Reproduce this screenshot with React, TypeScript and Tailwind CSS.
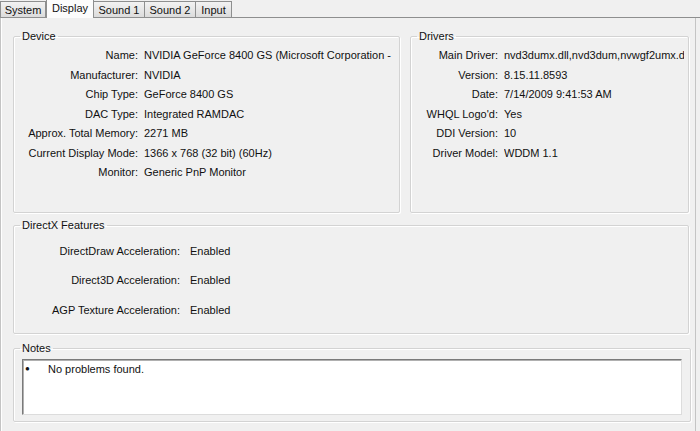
import React from "react";

const deviceRows: [string, string][] = [
  ["Name:", "NVIDIA GeForce 8400 GS (Microsoft Corporation -"],
  ["Manufacturer:", "NVIDIA"],
  ["Chip Type:", "GeForce 8400 GS"],
  ["DAC Type:", "Integrated RAMDAC"],
  ["Approx. Total Memory:", "2271 MB"],
  ["Current Display Mode:", "1366 x 768 (32 bit) (60Hz)"],
  ["Monitor:", "Generic PnP Monitor"],
];

const driverRows: [string, string][] = [
  ["Main Driver:", "nvd3dumx.dll,nvd3dum,nvwgf2umx.dll,nvwgf2um"],
  ["Version:", "8.15.11.8593"],
  ["Date:", "7/14/2009 9:41:53 AM"],
  ["WHQL Logo'd:", "Yes"],
  ["DDI Version:", "10"],
  ["Driver Model:", "WDDM 1.1"],
];

const dxRows: [string, string][] = [
  ["DirectDraw Acceleration:", "Enabled"],
  ["Direct3D Acceleration:", "Enabled"],
  ["AGP Texture Acceleration:", "Enabled"],
];

const tabs = [
  { name: "System", w: "w-[46px]" },
  { name: "Display", w: "w-[48px]", active: true },
  { name: "Sound 1", w: "w-[52px]" },
  { name: "Sound 2", w: "w-[52px]" },
  { name: "Input", w: "w-[37px]" },
];

function Legend({ children }: { children: React.ReactNode }) {
  return <legend className="ml-[6px] px-[2px] leading-[13px] text-[11px]">{children}</legend>;
}

const fieldsetCls =
  "border border-[#d3d3d3] rounded-[2px] shadow-[inset_1px_1px_0_#ffffff,1px_1px_0_#ffffff] min-w-0";

export default function App() {
  return (
    <div
      className="w-[700px] h-[431px] bg-[#f0f0f0] overflow-hidden text-[11px] text-[#111]"
      style={{ fontFamily: '"Liberation Sans", Arial, sans-serif' }}
    >
      {/* Tab strip */}
      <div className="h-[18px] flex items-end border-b border-[#8e8f8f] pl-0">
        {tabs.map((t) =>
          t.active ? (
            <div
              key={t.name}
              className={`${t.w} h-[19px] -mb-px bg-[#fcfcfc] border border-b-0 border-[#8e8f8f] flex items-start justify-center pt-[1px] leading-[14px] relative z-10`}
            >
              {t.name}
            </div>
          ) : (
            <div
              key={t.name}
              className={`${t.w} h-[16px] bg-gradient-to-b from-[#f2f2f2] to-[#dcdcdc] border border-b-0 border-[#8e8f8f] -ml-px first:ml-0 flex items-center justify-center leading-[14px]`}
            >
              {t.name}
            </div>
          )
        )}
      </div>

      {/* Panel */}
      <div className="h-[413px] border-r border-l border-[#c4c4c4] mr-[4px] pl-[12px] pr-[4px] pt-[12px] shadow-[inset_1px_0_0_#ffffff]">
        <div className="flex gap-[10px]">
          <fieldset className={`${fieldsetCls} w-[387px] h-[183px]`}>
            <Legend>Device</Legend>
            <div className="grid grid-cols-[124px_1fr] gap-x-[6px] pt-[3px]">
              {deviceRows.map(([l, v]) => (
                <React.Fragment key={l}>
                  <div className="text-right leading-[19.5px] whitespace-nowrap">{l}</div>
                  <div className="leading-[19.5px] whitespace-nowrap overflow-hidden">{v}</div>
                </React.Fragment>
              ))}
            </div>
          </fieldset>
          <fieldset className={`${fieldsetCls} w-[279px] h-[183px]`}>
            <Legend>Drivers</Legend>
            <div className="grid grid-cols-[87px_1fr] gap-x-[6px] pt-[3px] pr-[4px]">
              {driverRows.map(([l, v]) => (
                <React.Fragment key={l}>
                  <div className="text-right leading-[19.5px] whitespace-nowrap">{l}</div>
                  <div className="leading-[19.5px] whitespace-nowrap overflow-hidden">{v}</div>
                </React.Fragment>
              ))}
            </div>
          </fieldset>
        </div>

        <fieldset className={`${fieldsetCls} mt-[6px] w-[676px] h-[115px]`}>
          <Legend>DirectX Features</Legend>
          <div className="grid grid-cols-[166px_1fr] gap-x-[10px] pt-[5px]">
            {dxRows.map(([l, v]) => (
              <React.Fragment key={l}>
                <div className="text-right leading-[29.3px] whitespace-nowrap">{l}</div>
                <div className="leading-[29.3px] whitespace-nowrap">{v}</div>
              </React.Fragment>
            ))}
          </div>
        </fieldset>

        <fieldset className={`${fieldsetCls} mt-[8px] w-[678px] h-[80px]`}>
          <Legend>Notes</Legend>
          <div className="mx-[8px] mt-[4px] h-[56px] bg-white border border-t-[#7a7a7a] border-l-[#7a7a7a] border-r-[#dcdcdc] border-b-[#dcdcdc] shadow-[inset_1px_1px_0_#b0b0b0] flex items-start pt-[1px]">
            <span className="w-[25px] pl-[2px] text-[8px] leading-[16px]">●</span>
            <span className="leading-[16px]">No problems found.</span>
          </div>
        </fieldset>
      </div>
    </div>
  );
}
